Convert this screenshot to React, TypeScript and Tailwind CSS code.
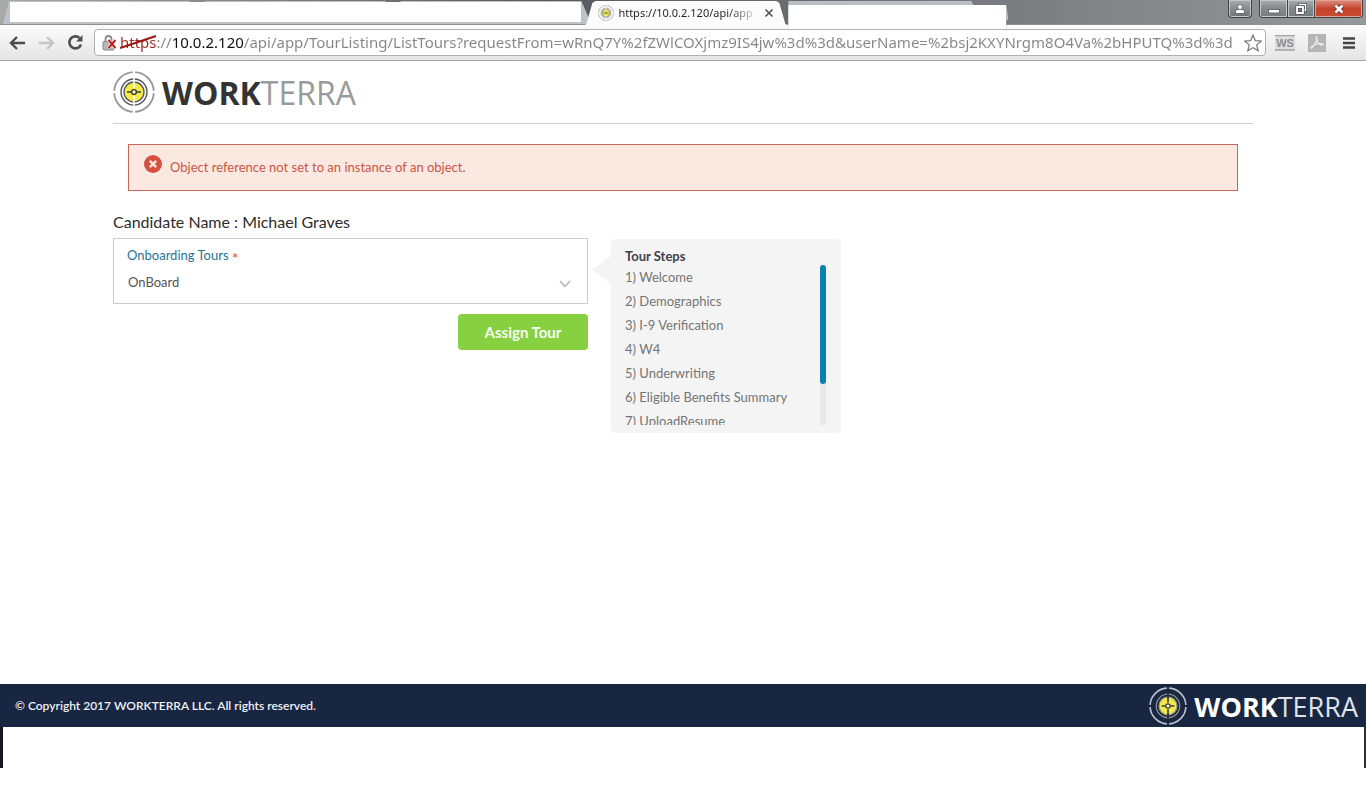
import { useState } from 'react'
import { clsx } from 'clsx'

const TOUR_STEPS = [
  'Welcome',
  'Demographics',
  'I-9 Verification',
  'W4',
  'Underwriting',
  'Eligible Benefits Summary',
  'UploadResume',
]

const PAGE_URL =
  'https://10.0.2.120/api/app/TourListing/ListTours?requestFrom=wRnQ7Y%2fZWlCOXjmz9IS4jw%3d%3d&userName=%2bsj2KXYNrgm8O4Va%2bHPUTQ%3d%3d'

function TargetMark({ className, dark = false }: { className?: string; dark?: boolean }) {
  const outer = dark ? '#b9c0cb' : '#98989a'
  const ring = dark ? '#8d8f86' : '#55565a'
  const gap = dark ? '#182642' : '#ffffff'
  return (
    <svg viewBox="0 0 42 42" fill="none" className={className} aria-hidden="true">
      <circle cx="21" cy="21" r="19.8" stroke={outer} strokeWidth="1.8" />
      <path d="M21 0v8M21 34v8M0 21h7M35 21h7" stroke={gap} strokeWidth="2.4" />
      <circle cx="21" cy="21" r="13" stroke={ring} strokeWidth="1.4" />
      <circle cx="21" cy="21" r="10" fill="#f4e84a" stroke={ring} strokeWidth="1.4" />
      <path d="M21 7v10M21 25v10" stroke={gap} strokeWidth="1.6" />
      <path d="M14 21h4.5M23.5 21H28" stroke="#3c3c3e" strokeWidth="1.5" />
      <circle cx="21" cy="21" r="2.4" fill="#fbf6b0" stroke="#3c3c3e" strokeWidth="1.4" />
    </svg>
  )
}

function Logo({ dark = false }: { dark?: boolean }) {
  return (
    <div className="flex items-center gap-[7px]">
      <TargetMark dark={dark} className={dark ? 'w-[38px] h-[38px]' : 'w-[42px] h-[42px]'} />
      <span
        className={clsx(
          "pt-[2px] font-['Open_Sans',sans-serif] leading-none",
          dark ? 'text-[27px] text-[#dfe3ea]' : 'text-[32px] text-[#9a9a9c]'
        )}
      >
        <span className={clsx('font-bold', dark ? 'text-white' : 'text-[#333333]')}>WORK</span>
        <span>TERRA</span>
      </span>
    </div>
  )
}

function WindowControls() {
  return (
    <div className="ml-auto mr-[3px] flex items-start gap-[7px] text-white">
      <button
        aria-label="User profile"
        className="flex h-[18px] w-6 items-center justify-center rounded-b border border-t-0 border-[#3f4346] bg-linear-to-b from-[#a9acae] to-[#6c7073] shadow-[inset_0_0_0_1px_#c5c7c8]"
      >
        <svg viewBox="0 0 12 12" className="w-3 h-3" fill="#fff" stroke="#4a4d50" strokeWidth=".7">
          <path d="M1.500 10.500V8.500Q1.500 6.500 4 6.500h4Q10.500 6.500 10.500 8.500v2Z" />
          <circle cx="6" cy="4" r="2.500" />
        </svg>
      </button>
      <div className="flex h-[18px] overflow-hidden rounded-b border border-t-0 border-[#3f4346]">
        <button
          aria-label="Minimize"
          className="flex w-7 items-center justify-center border-r border-[#3f4346] bg-linear-to-b from-[#a9acae] via-[#85898b] via-50% to-[#787c7f] shadow-[inset_0_0_0_1px_#c5c7c8]"
        >
          <svg viewBox="0 0 12 12" className="w-3 h-3">
            <rect x=".5" y="6.500" width="11" height="3.500" fill="#fff" stroke="#55585b" strokeWidth=".8" />
          </svg>
        </button>
        <button
          aria-label="Restore"
          className="flex w-[27px] items-center justify-center border-r border-[#3f4346] bg-linear-to-b from-[#a9acae] via-[#85898b] via-50% to-[#787c7f] shadow-[inset_0_0_0_1px_#c5c7c8]"
        >
          <svg viewBox="0 0 12 12" className="w-3 h-3" fill="none">
            <path d="M4.500 1.500h6v6h-6z" stroke="#45484b" strokeWidth="3" />
            <path d="M4.500 1.500h6v6h-6z" stroke="#fff" strokeWidth="1.600" />
            <path d="M2 4h6v6H2z" fill="#777" stroke="#45484b" strokeWidth="3" />
            <path d="M2 4h6v6H2z" stroke="#fff" strokeWidth="1.800" />
          </svg>
        </button>
        <button
          aria-label="Close window"
          className="flex w-[47px] items-center justify-center bg-linear-to-b from-[#dd8d7c] via-[#c4432c] via-50% to-[#cb4a30] shadow-[inset_0_0_0_1px_#e0a294]"
        >
          <svg viewBox="0 0 12 12" className="w-3 h-3">
            <path d="m2.500 2.500 7 7m0-7-7 7" stroke="#57302a" strokeWidth="4.200" />
            <path d="m2.500 2.500 7 7m0-7-7 7" stroke="#fff" strokeWidth="2.600" />
          </svg>
        </button>
      </div>
    </div>
  )
}

function BackgroundTab() {
  return (
    <div className="-mr-1 flex-1 bg-[#bcc2c8] [clip-path:polygon(3px_100%,9px_1px,calc(100%_-_10px)_1px,100%_100%)]" />
  )
}

function TabStrip() {
  return (
    <div className="flex h-6 bg-linear-to-r from-[#a9aaa5] via-[#58595d] via-40% to-[#96999b]">
      <div className="relative flex w-[43%]">
        <BackgroundTab />
        <BackgroundTab />
        <BackgroundTab />
        <div className="absolute bottom-[2px] left-[10px] right-[6px] top-[2px] bg-white" />
      </div>
      <div className="z-10 -ml-1 flex h-[26px] w-[205px] items-center bg-[#fcfcfc] pl-[15px] pr-[14px] [clip-path:polygon(0_100%,3px_24px,9px_3px,12px_1px,calc(100%_-_12px)_1px,calc(100%_-_9px)_3px,calc(100%_-_3px)_24px,100%_100%)]">
        <TargetMark className="h-4 w-4 shrink-0" />
        <span className="ml-1 whitespace-nowrap bg-linear-to-r from-[#222] from-80% to-[#ccc] bg-clip-text font-['Noto_Sans',sans-serif] text-[11px] text-transparent">
          https://10.0.2.120/api/app
        </span>
        <button aria-label="Close tab" className="ml-auto">
          <svg viewBox="0 0 10 10" className="h-[10px] w-[10px]">
            <path d="m1.500 1.500 7 7m0-7-7 7" stroke="#555" strokeWidth="1.700" />
          </svg>
        </button>
      </div>
      <div className="z-10 h-[29px] w-[220px] bg-[#b9bdc4] pt-[5px] [clip-path:polygon(0_1px,183px_1px,185px_5px,218px_5px,220px_19px,220px_20px,218px_20px,218px_100%,0_100%)]">
        <div className="h-6 w-[218px] bg-white" />
      </div>
      <WindowControls />
    </div>
  )
}

function Toolbar() {
  const [url, setUrl] = useState(PAGE_URL)
  return (
    <div className="flex h-[37px] items-center border-b border-t border-b-[#a3a3a3] border-t-[#8e9092] bg-linear-to-b from-[#fbfbfb] to-[#e5e5e5] pl-[9px] pr-[10px]">
      <button aria-label="Back">
        <svg viewBox="0 0 16 16" className="h-4 w-4" fill="none" stroke="#4c4c4c" strokeWidth="2.400">
          <path d="M16 8H2.500M8 2 2 8l6 6" />
        </svg>
      </button>
      <button aria-label="Forward" className="ml-[14px]">
        <svg viewBox="0 0 16 16" className="h-4 w-4" fill="none" stroke="#c4c4c4" strokeWidth="2.400">
          <path d="M0 8h13.500M8 2l6 6-6 6" />
        </svg>
      </button>
      <button aria-label="Reload" className="ml-3">
        <svg viewBox="0 0 17 17" className="h-[17px] w-[17px]">
          <path d="M14 10.500A6 6 0 1 1 12.500 4" fill="none" stroke="#505050" strokeWidth="2.600" />
          <path d="M15.500 1v6.500H9Z" fill="#505050" />
        </svg>
      </button>
      <div className="ml-[10px] flex h-[27px] min-w-0 flex-1 items-center rounded-sm border border-[#b0b0b0] bg-white pl-[7px] pr-[3px]">
        <svg viewBox="0 0 16 16" className="h-4 w-4 shrink-0" aria-hidden="true">
          <path d="M3.500 7V4a3 3 0 0 1 6 0v3" fill="none" stroke="#8b8b8b" strokeWidth="1.800" />
          <rect x="1" y="6.500" width="11" height="8.500" rx="1" fill="#b5b5b5" stroke="#8b8b8b" />
          <path d="m6.500 5 7 8m0-8-7 8" stroke="#fff" strokeWidth="3.400" />
          <path d="m6.500 5 7 8m0-8-7 8" stroke="#b81f1c" strokeWidth="1.900" />
        </svg>
        <div className="relative ml-[2px] flex min-w-0 flex-1 pb-[2px]">
          <input
            aria-label="Address"
            value={url}
            onChange={(e) => setUrl(e.target.value)}
            className="w-full bg-[linear-gradient(90deg,#9c2a26_37px,#858585_37px,#858585_52px,#111_52px,#111_124px,#858585_124px)] bg-clip-text font-['Noto_Sans',sans-serif] text-[15px] leading-6 text-transparent outline-none"
          />
          <svg viewBox="0 0 38 16" className="absolute left-0 top-1 h-4 w-[38px]" aria-hidden="true">
            <path d="M0 14 36 2" stroke="#9c1512" strokeWidth="2" />
          </svg>
        </div>
        <button aria-label="Bookmark this page">
          <svg viewBox="0 0 18 18" className="h-[18px] w-[18px]" fill="#fff" stroke="#777" strokeWidth="1.200">
            <path d="m9 1 2.300 5.600 6 .4-4.600 3.900 1.500 5.900L9 13.600l-5.200 3.200 1.500-5.900L.7 7l6-.4Z" />
          </svg>
        </button>
      </div>
      <button aria-label="WS extension" className="ml-[9px]">
        <svg viewBox="0 0 20 16" className="h-4 w-5">
          <path d="M0 0h20v16H0z" fill="#dedede" />
          <path d="M0 .500h20M0 15h20" stroke="#a5a5a5" strokeWidth="1.500" />
          <text x="10" y="12" textAnchor="middle" fontSize="11" fontWeight="700" fill="#8f8f8f" fontFamily="Liberation Sans, sans-serif">
            WS
          </text>
        </svg>
      </button>
      <button aria-label="PDF extension" className="ml-[13px]">
        <svg viewBox="0 0 18 18" className="h-[18px] w-[18px]">
          <rect width="18" height="18" fill="#b5b5b5" />
          <path
            d="M8 3c2 0 1 5-4 11-2 1-1-2 5-4 5-1 7 0 6 1-2 1-7-3-7-8Z"
            fill="none"
            stroke="#eee"
            strokeWidth="1.200"
          />
        </svg>
      </button>
      <button aria-label="Menu" className="ml-4">
        <svg viewBox="0 0 14 14" className="h-[14px] w-[14px]">
          <path d="M1 2.500h12M1 7h12M1 11.500h12" stroke="#444" strokeWidth="2.600" />
        </svg>
      </button>
    </div>
  )
}

function ErrorAlert({ message }: { message: string }) {
  return (
    <div
      role="alert"
      className="mx-[15px] mt-5 flex h-[47px] items-start gap-2 border border-[#c2685c] bg-[#fbe9e1] px-[15px] pt-[10px] text-[13px] text-[#cb5544]"
    >
      <svg viewBox="0 0 18 18" className="h-[18px] w-[18px]" aria-hidden="true">
        <circle cx="9" cy="9" r="9" fill="#d4503f" />
        <path d="m5.800 5.800 6.400 6.400m0-6.400-6.400 6.400" stroke="#fbe9e1" strokeWidth="2.400" />
      </svg>
      <p className="pt-[2px] leading-5">{message}</p>
    </div>
  )
}

function TourForm() {
  return (
    <form className="w-5/12" onSubmit={(e) => e.preventDefault()}>
      <div className="relative h-[66px] border border-[#cccccc] px-[13px] pt-[6px] text-[13px]">
        <label htmlFor="tour" className="block h-5 leading-5 text-[#1f7396]">
          Onboarding Tours <span className="align-[-4px] text-base leading-none text-[#ee4444]">*</span>
        </label>
        <select
          id="tour"
          className="mt-[7px] block w-full appearance-none bg-transparent pl-px leading-5 text-[#555555] outline-none"
        >
          <option>OnBoard</option>
        </select>
        <svg viewBox="0 0 12 8" className="pointer-events-none absolute right-4 top-[41px] h-2 w-3">
          <path d="m1 1 5 5.500L11 1" fill="none" stroke="#b5b5b5" strokeWidth="1.500" />
        </svg>
      </div>
      <button
        type="submit"
        className="ml-auto mt-[10px] block h-9 w-[130px] rounded bg-[#87d03f] text-[15px] font-bold text-[#f8fdf2]"
      >
        Assign Tour
      </button>
    </form>
  )
}

function TourStepsPanel() {
  return (
    <section className="relative ml-[23px] mt-px w-[230px] rounded-[3px] bg-[#f4f4f4] pb-2 pl-[14px] pr-[15px] pt-2 text-[13px]">
      <div className="absolute -left-[19px] top-[17px] h-7 w-[19px] bg-[#f4f4f4] [clip-path:polygon(0_50%,100%_0,100%_100%)]" />
      <h2 className="h-[18px] font-bold leading-[18px] text-[#3d424b]">Tour Steps</h2>
      <div className="flex h-40 overflow-hidden">
        <ol className="flex-1 leading-6 text-[#757575]">
          {TOUR_STEPS.map((step, i) => (
            <li key={step}>{`${i + 1}) ${step}`}</li>
          ))}
        </ol>
        <div className="h-full w-[6px] bg-[#e8e8e8]">
          <div className="h-[119px] rounded-[3px] bg-[#0a7fb0]" />
        </div>
      </div>
    </section>
  )
}

export default function App() {
  return (
    <div className="flex min-h-screen flex-col bg-white font-['Lato',sans-serif]">
      <TabStrip />
      <Toolbar />
      <main className="mx-auto w-full max-w-[1140px] flex-1">
        <header className="flex h-[63px] items-center border-b border-[#cfcfcf]">
          <Logo />
        </header>
        <ErrorAlert message="Object reference not set to an instance of an object." />
        <h1 className="mt-5 text-base leading-[22px] text-[#2c2c2c]">Candidate Name : Michael Graves</h1>
        <div className="mt-[5px] flex items-start">
          <TourForm />
          <TourStepsPanel />
        </div>
      </main>
      <footer className="flex h-[43px] items-center justify-between bg-[#182642] pl-[15px] pr-2">
        <p className="text-xs font-semibold text-[#eef1f5]">© Copyright 2017 WORKTERRA LLC. All rights reserved.</p>
        <Logo dark />
      </footer>
      <div className="mb-11 h-[41px] border-l-[3px] border-r-2 border-l-[#171722] border-r-[#2b2b30]" />
    </div>
  )
}
